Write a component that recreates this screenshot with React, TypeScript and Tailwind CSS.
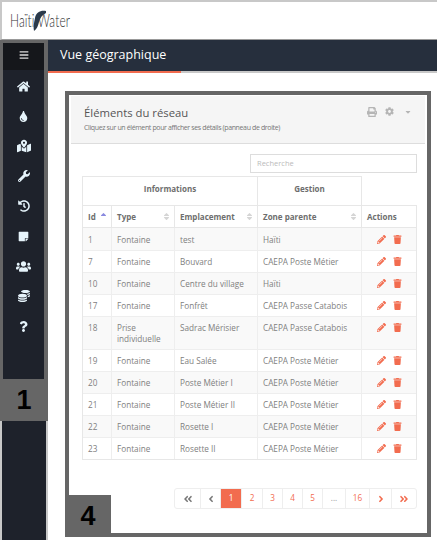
import React from "react";
import { FaHome, FaTint, FaMapMarkedAlt, FaWrench, FaHistory, FaStickyNote, FaUsers, FaCoins, FaQuestion, FaBars, FaPrint, FaCog, FaCaretDown, FaPencilAlt, FaTrash, FaAngleDoubleLeft, FaAngleDoubleRight, FaAngleLeft, FaAngleRight, FaSort, FaSortUp } from "react-icons/fa";

const rows: [string, string, string, string, boolean?][] = [
  ["1", "Fontaine", "test", "Haïti"],
  ["7", "Fontaine", "Bouvard", "CAEPA Poste Métier"],
  ["10", "Fontaine", "Centre du village", "Haïti"],
  ["17", "Fontaine", "Fonfrêt", "CAEPA Passe Catabois"],
  ["18", "Prise individuelle", "Sadrac Mérisier", "CAEPA Passe Catabois", true],
  ["19", "Fontaine", "Eau Salée", "CAEPA Poste Métier"],
  ["20", "Fontaine", "Poste Métier I", "CAEPA Poste Métier"],
  ["21", "Fontaine", "Poste Métier II", "CAEPA Poste Métier"],
  ["22", "Fontaine", "Rosette I", "CAEPA Poste Métier"],
  ["23", "Fontaine", "Rosette II", "CAEPA Poste Métier"],
];

const navIcons = [
  { I: FaHome, s: 13 },
  { I: FaTint, s: 11 },
  { I: FaMapMarkedAlt, s: 14 },
  { I: FaWrench, s: 12 },
  { I: FaHistory, s: 12 },
  { I: FaStickyNote, s: 11 },
  { I: FaUsers, s: 15 },
  { I: FaCoins, s: 12 },
  { I: FaQuestion, s: 11 },
];

const cols = "grid grid-cols-[29px_63px_83px_104px_54px]";

function Head({ label, sort }: { label: string; sort?: "up" | "none" }) {
  return (
    <div className="flex items-center justify-between border-r border-[#e7e7e7] pl-[5px] pr-[3px] last:border-r-0">
      <span className="text-[8px] font-bold text-[#6e6e6e]">{label}</span>
      {sort === "up" && <FaSortUp size={9} className="text-[#8a8ae0]" />}
      {sort === "none" && <FaSort size={9} className="text-[#d5d5d5]" />}
    </div>
  );
}

function Page({ w, active, muted, children }: { w: string; active?: boolean; muted?: boolean; children: React.ReactNode }) {
  return (
    <div className={`${w} flex items-center justify-center border-r border-[#eee] text-[8.2px] last:border-r-0 ${active ? "bg-[#f26c4f] text-white" : muted ? "text-[#999]" : "text-[#f26c4f]"}`}>
      {children}
    </div>
  );
}

export default function App() {
  return (
    <div className="relative flex h-[540px] w-[437px] flex-col overflow-hidden bg-white font-['Open_Sans',sans-serif]">
      <header className="flex h-[40px] shrink-0 items-center border-b border-l-2 border-t-2 border-b-[#999] border-l-[#c8c8c8] border-t-[#c8c8c8] pl-[8px]">
        <div className="relative flex h-[24px] w-[62px] items-center">
          <span className="relative origin-left scale-x-[0.7] whitespace-nowrap text-[17px] font-light tracking-[0.2px] text-[#333] font-['Lato',sans-serif]">Haïti Water</span>
          <svg width="14" height="22" viewBox="0 0 14 22" className="absolute left-[22px] top-[1px]">
            <path d="M14 1C9 0 4 2 3 8C2 13 1 17 2 21C5 19 6 16 7 12C8 8 10 5 14 3Z" fill="#2b3a4a" />
          </svg>
        </div>
      </header>

      <div className="flex min-h-0 flex-1">
        <aside className="flex w-[48px] shrink-0 flex-col bg-[#1e222b]">
          <div className="flex h-[339px] shrink-0 flex-col border-l-[3px] border-r-[4px] border-t-[3px] border-[#666] bg-[#1e222b]">
            <div className="flex h-[27px] shrink-0 items-center justify-center bg-[#15171b] pb-[3px]">
              <FaBars size={10} className="text-[#ddd]" />
            </div>
            <nav className="flex flex-col items-center pt-[1px]">
              {navIcons.map(({ I, s }, i) => (
                <div key={i} className="flex h-[30px] items-center justify-center">
                  <I size={s} className="text-[#e6f4fb]" />
                </div>
              ))}
            </nav>
          </div>
          <div className="flex h-[42px] shrink-0 items-center justify-center bg-[#666] font-['Liberation_Sans_Narrow','Liberation_Sans',sans-serif] text-[27px] font-bold text-black">
            1
          </div>
          <div className="flex-1 border-x-2 border-[#c8c8c8]" />
        </aside>

        <main className="flex min-w-0 flex-1 flex-col">
          <div className="flex h-[31px] shrink-0 items-center bg-[#262f3d] pl-[12px] text-[12.5px] text-white">
            Vue géographique
          </div>
          <div className="flex h-[2px] shrink-0">
            <div className="w-[133px] bg-[#f26c4f]" />
            <div className="flex-1 bg-[#c8c8c8]" />
          </div>
          <div className="pl-[17px] pr-[6px] pt-[18px]">
            <section className="relative flex h-[446px] flex-col border-4 border-[#666] bg-white">
              <div className="mx-[2px] mt-[1px] flex h-[48px] shrink-0 justify-between border-b border-[#ddd] bg-[#f5f5f5] pl-[13px] pr-[13px]">
                <div className="pt-[8px]">
                  <div className="text-[11.3px] leading-[18px] text-[#555]">Éléments du réseau</div>
                  <div className="text-[7px] leading-[12px] tracking-[-0.37px] text-[#777]">Cliquez sur un élément pour afficher ses détails (panneau de droite)</div>
                </div>
                <div className="flex items-start gap-[8px] pt-[11px] text-[#b5b5b5]">
                  <FaPrint size={10} />
                  <FaCog size={9} />
                  <FaCaretDown size={8} className="ml-[2px] mt-[1px]" />
                </div>
              </div>

              <div className="flex flex-1 flex-col pl-[13px] pr-[10px]">
                <div className="flex justify-end pt-[10px]">
                  <div className="flex h-[19px] w-[167px] items-center border border-[#ddd] pl-[6px] text-[7.5px] text-[#bbb]">Recherche</div>
                </div>
                <div className="mt-[3px] flex h-[29px] w-[280px] border border-b-0 border-[#e7e7e7] text-[8px] font-bold text-[#6e6e6e]">
                  <div className="flex w-[175px] items-start justify-center border-r border-[#e7e7e7] pt-[6px]">Informations</div>
                  <div className="flex flex-1 items-start justify-center pt-[6px]">Gestion</div>
                </div>
                <div className="border border-[#e7e7e7]">
                  <div className={`${cols} h-[22px] border-b border-[#e7e7e7]`}>
                    <Head label="Id" sort="up" />
                    <Head label="Type" sort="none" />
                    <Head label="Emplacement" sort="none" />
                    <Head label="Zone parente" sort="none" />
                    <Head label="Actions" />
                  </div>
                  {rows.map((r, i) => {
                    const pad = i === 0 ? "pt-[6px]" : "pt-[5px]";
                    return (
                      <div key={r[0]} className={`${cols} ${r[4] ? "h-[33px]" : i === 0 ? "h-[23px]" : i === 9 ? "h-[21px]" : "h-[22px]"} border-b border-[#eee] text-[8.2px] leading-[11px] text-[#808080] last:border-b-0 ${i % 2 === 0 ? "bg-[#f9f9f9]" : "bg-white"}`}>
                        <div className={`border-r border-[#eee] pl-[5px] ${pad}`}>{r[0]}</div>
                        <div className={`border-r border-[#eee] pl-[5px] ${pad}`}>{r[1]}</div>
                        <div className={`border-r border-[#eee] pl-[5px] ${pad}`}>{r[2]}</div>
                        <div className={`border-r border-[#eee] pl-[5px] ${pad}`}>{r[3]}</div>
                        <div className={`flex items-start gap-[7px] pl-[15px] text-[#f26c4f] ${i === 0 ? "pt-[7px]" : "pt-[6px]"}`}>
                          <FaPencilAlt size={9} />
                          <FaTrash size={9} />
                        </div>
                      </div>
                    );
                  })}
                </div>
                <div className="ml-[92px] mt-[28px] flex h-[21px] w-[243px] rounded-[3px] border border-[#eee]">
                  <Page w="w-[26px]" muted><FaAngleDoubleLeft size={10} className="text-[#777]" /></Page>
                  <Page w="w-[20px]" muted><FaAngleLeft size={10} className="text-[#777]" /></Page>
                  <Page w="w-[21px]" active>1</Page>
                  <Page w="w-[21px]">2</Page>
                  <Page w="w-[20px]">3</Page>
                  <Page w="w-[20px]">4</Page>
                  <Page w="w-[20px]">5</Page>
                  <Page w="w-[23px]" muted>...</Page>
                  <Page w="w-[24px]">16</Page>
                  <Page w="w-[22px]"><FaAngleRight size={10} /></Page>
                  <Page w="w-[24px]"><FaAngleDoubleRight size={10} /></Page>
                </div>
              </div>

              <div className="absolute bottom-[-4px] left-[-4px] flex h-[42px] w-[46px] items-center justify-center bg-[#666] font-['Liberation_Sans_Narrow','Liberation_Sans',sans-serif] text-[27px] font-bold text-black">
                4
              </div>
            </section>
          </div>
        </main>
      </div>
    </div>
  );
}
